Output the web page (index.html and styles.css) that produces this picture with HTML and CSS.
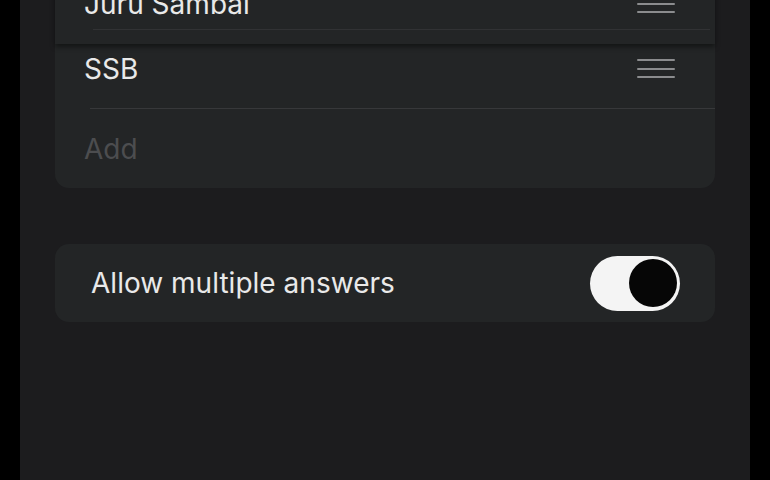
FILE: index.html
```html
<!DOCTYPE html>
<html>
<head>
<meta charset="utf-8">
<link rel="stylesheet" href="styles.css">
</head>
<body>
<div class="screen">
  <div class="list-area">
    <div class="card">
      <div class="row">
        <span class="label">SSB</span>
        <span class="grip"><i></i><i></i><i></i></span>
      </div>
      <div class="sep"></div>
      <div class="row">
        <span class="label placeholder">Add</span>
      </div>
    </div>
    <div class="dragged">
      <div class="row">
        <span class="label">Juru Sambal</span>
        <span class="grip"><i></i><i></i><i></i></span>
      </div>
      <div class="drag-sep"></div>
    </div>
  </div>
  <div class="card toggle-card">
    <span class="label">Allow multiple answers</span>
    <span class="switch"><span class="knob"></span></span>
  </div>
</div>
</body>
</html>
```
FILE: styles.css
```css
html, body {
  margin: 0;
  padding: 0;
  background: #000;
  height: 480px;
  overflow: hidden;
}
.screen {
  margin: 0 20px;
  height: 480px;
  background: #1c1c1e;
  padding: 29px 35px 0;
  box-sizing: border-box;
  font-family: Inter, "Noto Sans", sans-serif;
  color: #e9e9e9;
}
.list-area {
  position: relative;
}
.card {
  background: #232526;
  border-radius: 14px;
}
.row {
  height: 79px;
  display: flex;
  align-items: center;
  justify-content: space-between;
  padding: 0 40px 0 29px;
}
.label {
  font-size: 28px;
  letter-spacing: 0.02px;
}
.placeholder {
  color: #4c4d4f;
}
.grip {
  display: flex;
  flex-direction: column;
  gap: 6.5px;
  width: 38px;
}
.grip i {
  display: block;
  height: 2px;
  background: #8b8c8e;
  border-radius: 1px;
}
.sep {
  height: 1px;
  background: #37383a;
  margin-left: 35px;
}
.dragged {
  position: absolute;
  left: 0;
  right: 0;
  top: -65px;
  background: #232526;
  box-shadow: 0 3px 5px rgba(0, 0, 0, 0.45);
}
.drag-sep {
  height: 1px;
  background: #313234;
  margin: 0 5px 0 38px;
  position: relative;
  top: -14px;
}
.toggle-card {
  margin-top: 56px;
  height: 78px;
  display: flex;
  align-items: center;
  justify-content: space-between;
  padding: 0 35px 0 36px;
}
.switch {
  width: 90px;
  height: 55px;
  border-radius: 28px;
  background: #f4f4f4;
  display: flex;
  align-items: center;
  justify-content: flex-end;
  padding-right: 3px;
  box-sizing: border-box;
}
.knob {
  width: 48px;
  height: 48px;
  border-radius: 50%;
  background: #060606;
}
```
